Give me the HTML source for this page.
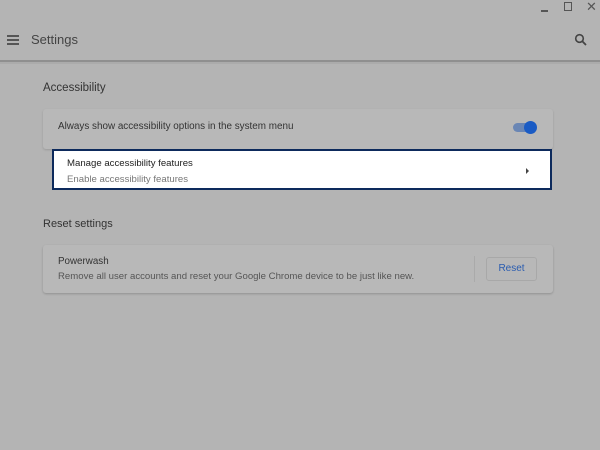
<!DOCTYPE html>
<html><head><style>
*{margin:0;padding:0;box-sizing:border-box}
body{width:600px;height:450px;background:#b4b4b4;font-family:"Liberation Sans",sans-serif;position:relative;overflow:hidden;color:#222}
.a{position:absolute}
.t{font-size:10px;white-space:nowrap}
</style></head><body>
<div class="a" style="left:0;top:60px;width:600px;height:2px;background:#8f8f8f"></div>
<div class="a" style="left:0;top:62px;width:600px;height:2px;background:#ababab"></div>
<div class="a" style="left:541px;top:10px;width:7px;height:1.5px;background:#555"></div>
<div class="a" style="left:564px;top:2px;width:8px;height:9px;border:1.5px solid #555"></div>
<div class="a t" style="left:586px;top:-1px;font-size:13px;color:#555">✕</div>
<div class="a" style="left:7px;top:35px;width:12px;height:2px;background:#555;box-shadow:0 4px 0 #555,0 8px 0 #555"></div>
<div class="a" style="left:31px;top:32px;font-size:13px;color:#444">Settings</div>
<svg class="a" style="left:574px;top:33px" width="14" height="14" viewBox="0 0 14 14"><circle cx="5.5" cy="5.5" r="3.8" fill="none" stroke="#444" stroke-width="1.6"/><path d="M8.3 8.3L12 12" stroke="#444" stroke-width="1.8"/></svg>
<div class="a t" style="left:43px;top:82px;font-size:11.5px;color:#333">Accessibility</div>
<div class="a" style="left:43px;top:109px;width:510px;height:40px;background:#b8b8b8;border-radius:3px;box-shadow:0 1px 2px rgba(0,0,0,.15)"></div>
<div class="a t" style="left:58px;top:121px;color:#333;font-size:9.9px">Always show accessibility options in the system menu</div>
<div class="a" style="left:513px;top:123px;width:23px;height:9px;border-radius:4.5px;background:#6a86b4"></div>
<div class="a" style="left:524px;top:121px;width:13px;height:13px;border-radius:50%;background:#1a5bc4"></div>
<div class="a" style="left:52px;top:149px;width:500px;height:41px;background:#fff;border:2px solid #0d2a5c"></div>
<div class="a t" style="left:67px;top:158px;color:#222;font-size:9.6px">Manage accessibility features</div>
<div class="a t" style="left:67px;top:174px;color:#777;font-size:9.6px">Enable accessibility features</div>
<div class="a" style="left:526px;top:168px;width:0;height:0;border-left:3px solid #444;border-top:3px solid transparent;border-bottom:3px solid transparent"></div>
<div class="a t" style="left:43px;top:218px;font-size:11px;color:#333">Reset settings</div>
<div class="a" style="left:43px;top:245px;width:510px;height:48px;background:#b8b8b8;border-radius:3px;box-shadow:0 1px 2px rgba(0,0,0,.2)"></div>
<div class="a t" style="left:58px;top:256px;color:#333;font-size:9.8px">Powerwash</div>
<div class="a t" style="left:58px;top:271px;color:#555;font-size:9.6px">Remove all user accounts and reset your Google Chrome device to be just like new.</div>
<div class="a" style="left:474px;top:256px;width:1px;height:26px;background:#aaa"></div>
<div class="a" style="left:486px;top:257px;width:51px;height:24px;border:1px solid #a8a8a8;border-radius:3px;color:#2a5cb0;font-size:10px;text-align:center;line-height:22px">Reset</div>
</body></html>
